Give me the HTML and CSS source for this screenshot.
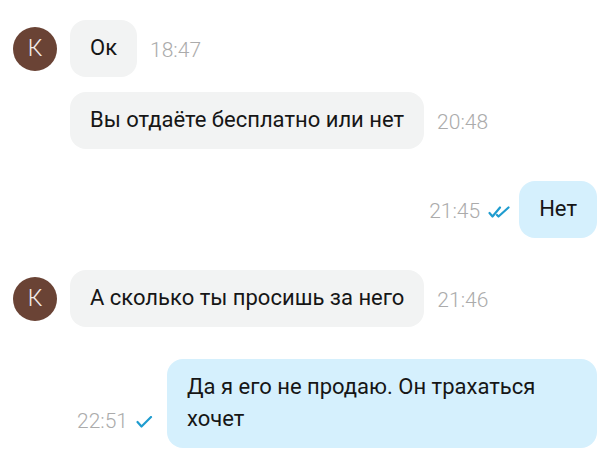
FILE: index.html
```html
<!DOCTYPE html>
<html lang="ru">
<head>
  <meta charset="UTF-8">
  <title>Чат</title>
  <link rel="stylesheet" href="styles.css">
</head>
<body>
  <div class="chat">

    <div class="row in">
      <div class="avatar">К</div>
      <div class="bubble">Ок</div>
      <div class="meta"><span class="time">18:47</span></div>
    </div>

    <div class="row in cont">
      <div class="bubble">Вы отдаёте бесплатно или нет</div>
      <div class="meta"><span class="time">20:48</span></div>
    </div>

    <div class="row out">
      <div class="meta">
        <span class="time">21:45</span>
        <svg class="check" width="22" height="12" viewBox="0 0 22 12">
          <path d="M1.5 7 L4.5 10.5 L12 1.5" />
          <path d="M9 9 L10.5 10.5 L20.5 1.5" />
        </svg>
      </div>
      <div class="bubble">Нет</div>
    </div>

    <div class="row in">
      <div class="avatar">К</div>
      <div class="bubble">А сколько ты просишь за него</div>
      <div class="meta"><span class="time">21:46</span></div>
    </div>

    <div class="row out">
      <div class="meta">
        <span class="time">22:51</span>
        <svg class="check" width="22" height="12" viewBox="0 0 22 12">
          <path d="M1.5 6 L5.5 10.5 L15 1" />
        </svg>
      </div>
      <div class="bubble">Да я его не продаю. Он трахаться хочет</div>
    </div>

  </div>
</body>
</html>
```

FILE: styles.css
```css
body {
  margin: 0;
  background: #fff;
  font-family: Roboto, 'Noto Sans', sans-serif;
  color: #161616;
}
.chat {
  display: flex;
  flex-direction: column;
  gap: 32px;
  padding: 20px 7px 0 13px;
}
.row {
  display: flex;
  align-items: flex-end;
  gap: 13px;
}
.row.cont {
  margin-top: -17px;
  padding-left: 57px;
}
.row.out {
  justify-content: flex-end;
  gap: 9px;
}
.avatar {
  align-self: center;
  width: 44px;
  height: 44px;
  border-radius: 50%;
  background: #6a4335;
  color: #f3ecea;
  font-size: 23px;
  font-weight: 300;
  display: flex;
  align-items: center;
  justify-content: center;
  flex-shrink: 0;
}
.bubble {
  background: #f2f3f3;
  border-radius: 16px;
  padding: 12px 20px 13px;
  font-size: 22px;
  line-height: 32px;
  max-width: 390px;
}
.out .bubble {
  background: #d5f0fd;
}
.meta {
  display: flex;
  align-items: center;
  gap: 8px;
  margin-bottom: 15px;
}
.time {
  font-size: 21px;
  font-weight: 300;
  line-height: 24px;
  color: #ababab;
}
.check {
  fill: none;
  stroke: #1f9ccf;
  stroke-width: 2.2;
  stroke-linecap: round;
  stroke-linejoin: round;
  margin-top: 1px;
}
```
